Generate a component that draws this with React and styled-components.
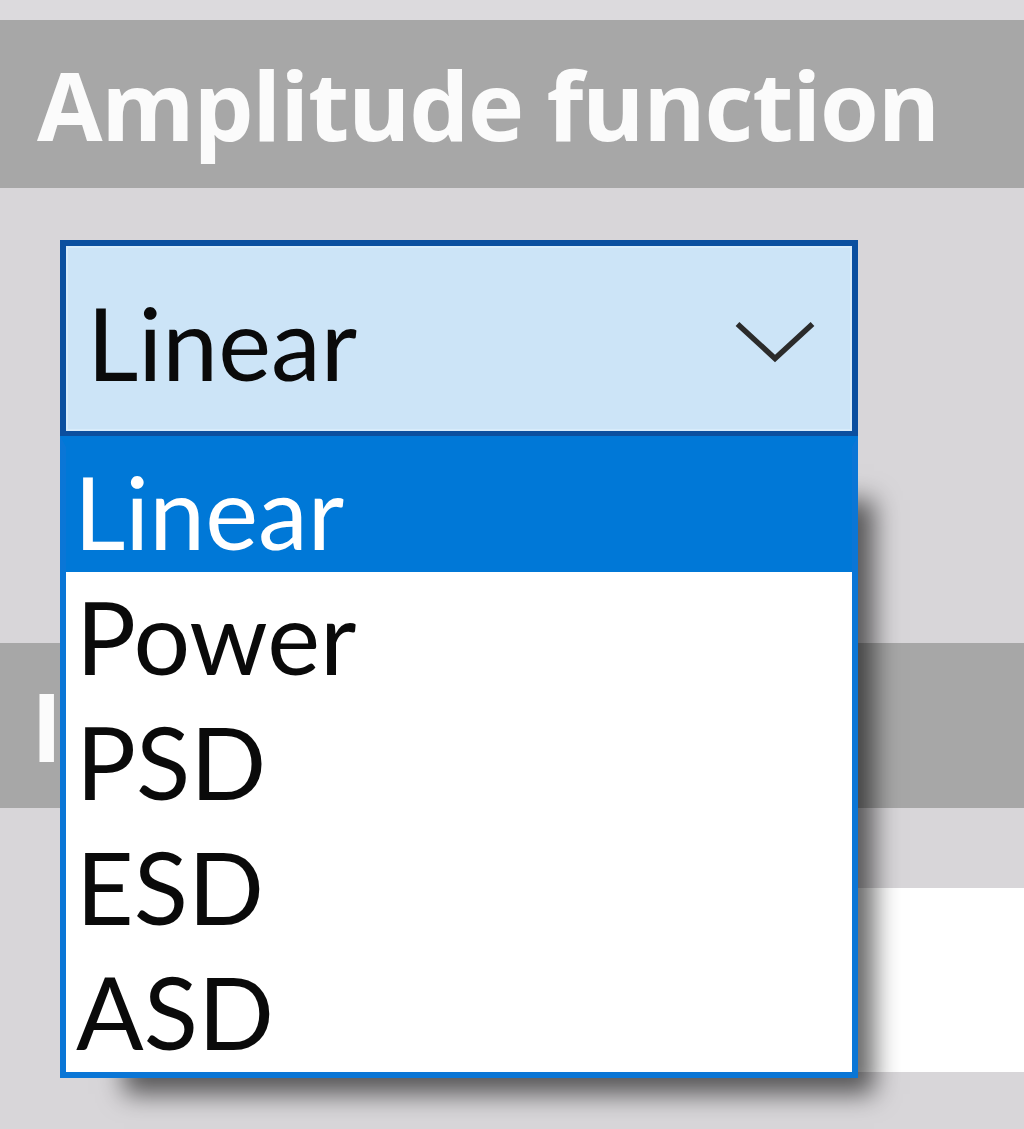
import React from "react";
import styled, { createGlobalStyle } from "styled-components";

const Global = createGlobalStyle`
  html, body { margin: 0; padding: 0; background: #d8d6d9; }
  body { font-family: "Lato", "Liberation Sans", sans-serif; }
  #root { width: 100%; }
`;

const Page = styled.div`
  width: 1024px;
  min-height: 1129px;
  background: #d8d6d9;
  overflow: hidden;
`;

const TopStrip = styled.div`
  height: 20px;
  background: #dcdadd;
`;

const Header = styled.h2`
  margin: 0;
  box-sizing: border-box;
  height: ${(p) => p.$h}px;
  line-height: ${(p) => p.$h}px;
  padding-left: ${(p) => p.$pad}px;
  background: #a7a7a7;
  color: #fbfbfb;
  font-family: "Open Sans", "Noto Sans", sans-serif;
  font-weight: 700;
  font-size: 95px;
  letter-spacing: -1.2px;
  white-space: nowrap;
  overflow: hidden;
`;

const Body = styled.div`
  padding: ${(p) => p.$top}px 0 ${(p) => p.$bottom}px 60px;
`;

const SelectWrap = styled.div`
  position: relative;
  width: 798px;
`;

const SelectBox = styled.div`
  box-sizing: border-box;
  height: 196px;
  display: flex;
  align-items: center;
  justify-content: space-between;
  padding: 6px 37px 0 21px;
  border: 6px solid #0b4f9f;
  border-bottom-width: 5px;
  background: #cce4f7;
  box-shadow: inset 0 0 0 2px #d7ebfa;
  color: #0a0a0a;
  font-family: "Lato", "Liberation Sans", sans-serif;
  font-size: 100px;
  line-height: 120px;
`;

const Chevron = styled.svg`
  display: block;
  flex: none;
`;

const List = styled.ul`
  position: absolute;
  top: 196px;
  left: 0;
  z-index: 2;
  box-sizing: border-box;
  width: 798px;
  margin: 0;
  padding: 0;
  list-style: none;
  background: #ffffff;
  border: 6px solid #0a76d6;
  border-top: 11px solid #0078d7;
  box-shadow: 40px 40px 24px -24px rgba(0, 0, 0, 0.6);
`;

const Option = styled.li`
  box-sizing: border-box;
  height: 125px;
  padding: 3px 0 0 ${(p) => (p.$active ? 8 : 10)}px;
  line-height: 122px;
  font-family: "Lato", "Liberation Sans", sans-serif;
  font-size: 100px;
  background: ${(p) => (p.$active ? "#0078d7" : "transparent")};
  color: ${(p) => (p.$active ? "#ffffff" : "#0a0a0a")};
  white-space: nowrap;
`;

const Field = styled.div`
  height: 184px;
  margin-right: -40px;
  background: #ffffff;
`;

const options = ["Linear", "Power", "PSD", "ESD", "ASD"];

export default function App() {
  return (
    <Page>
      <Global />
      <TopStrip />
      <Header $h={168} $pad={37}>Amplitude function</Header>
      <Body $top={52} $bottom={207}>
        <SelectWrap>
          <SelectBox>
            <span>Linear</span>
            <Chevron width="80" height="42" viewBox="0 0 80 42">
              <polyline
                points="2.5,3 40,37.5 77.5,3"
                fill="none"
                stroke="#2b2b2b"
                strokeWidth="5.5"
              />
            </Chevron>
          </SelectBox>
          <List>
            {options.map((o, i) => (
              <Option key={o} $active={i === 0}>
                {o}
              </Option>
            ))}
          </List>
        </SelectWrap>
      </Body>
      <Header $h={165} $pad={31}>Interpolation</Header>
      <Body $top={80} $bottom={57}>
        <Field />
      </Body>
    </Page>
  );
}
